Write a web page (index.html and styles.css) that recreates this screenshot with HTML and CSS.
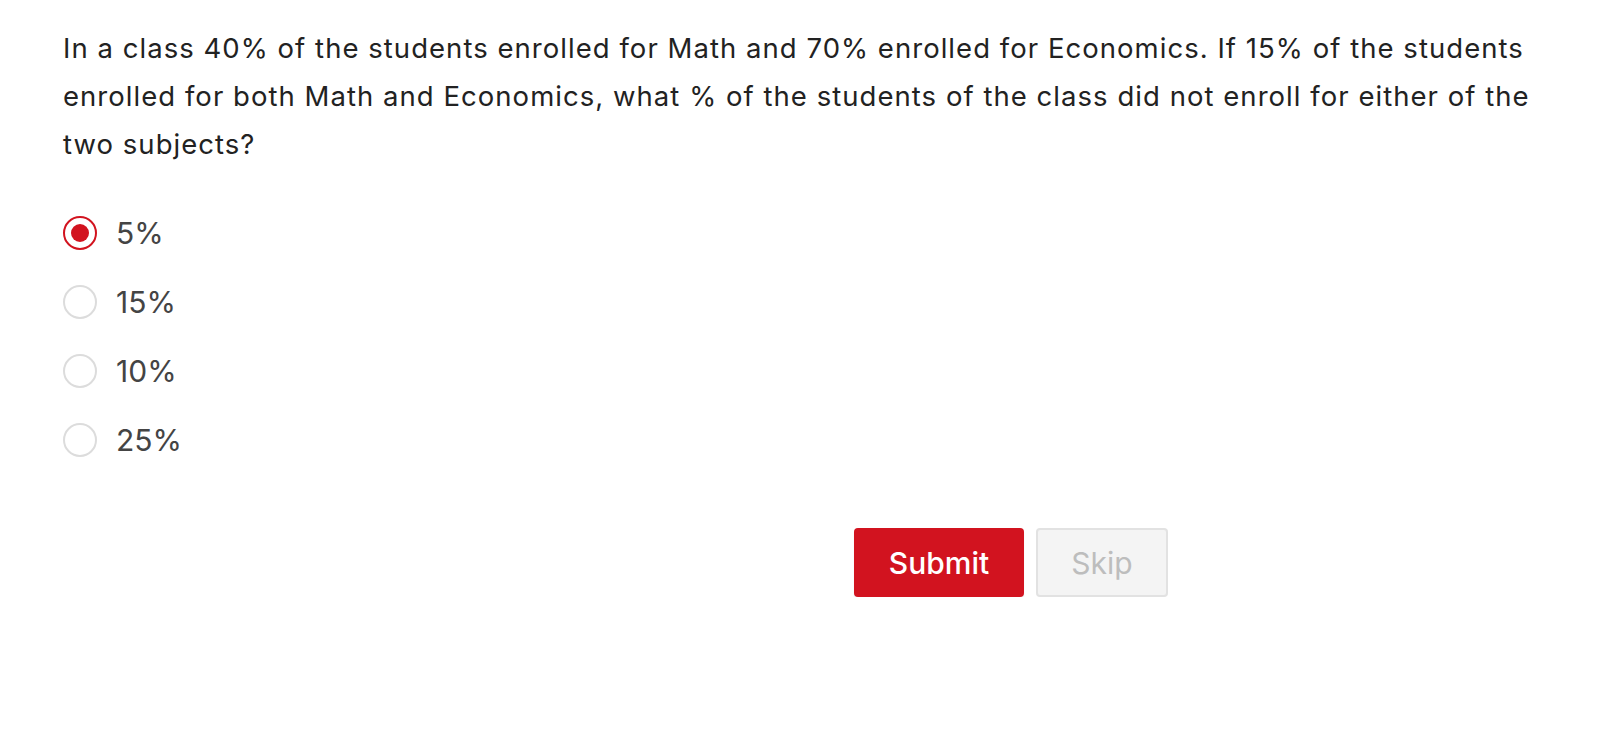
FILE: index.html
```html
<!DOCTYPE html>
<html lang="en">
<head>
<meta charset="utf-8">
<title>Question</title>
<link rel="stylesheet" href="styles.css">
</head>
<body>
<main class="quiz">
  <p class="question">In a class 40% of the students enrolled for Math and 70% enrolled for Economics. If 15% of the students enrolled for both Math and Economics, what % of the students of the class did not enroll for either of the two subjects?</p>
  <ul class="options">
    <li class="option checked"><span class="radio"><span class="dot"></span></span><span class="label">5%</span></li>
    <li class="option"><span class="radio"></span><span class="label">15%</span></li>
    <li class="option"><span class="radio"></span><span class="label">10%</span></li>
    <li class="option"><span class="radio"></span><span class="label">25%</span></li>
  </ul>
  <div class="actions">
    <button class="btn btn-submit">Submit</button>
    <button class="btn btn-skip">Skip</button>
  </div>
</main>
</body>
</html>
```
FILE: styles.css
```css
html, body {
  margin: 0;
  padding: 0;
  background: #ffffff;
}
.quiz {
  padding: 24px 0 0 63px;
  width: 1482px;
  font-family: Inter, "Liberation Sans", sans-serif;
}
.question {
  margin: 0;
  font-size: 27.5px;
  letter-spacing: 1.04px;
  line-height: 48px;
  color: #222222;
}
.options {
  list-style: none;
  margin: 48px 0 0 0;
  padding: 0;
  display: flex;
  flex-direction: column;
  gap: 35px;
}
.option {
  display: flex;
  align-items: center;
  height: 34px;
  gap: 19px;
}
.radio {
  box-sizing: border-box;
  width: 34px;
  height: 34px;
  border-radius: 50%;
  border: 2px solid #dcdcdc;
  display: flex;
  align-items: center;
  justify-content: center;
  flex: none;
}
.option.checked .radio {
  border-color: #d2131f;
}
.dot {
  width: 18px;
  height: 18px;
  border-radius: 50%;
  background: #d2131f;
}
.label {
  font-size: 30px;
  color: #444444;
  line-height: 34px;
}
.actions {
  display: flex;
  gap: 12px;
  margin: 71px 0 0 791px;
}
.btn {
  box-sizing: border-box;
  height: 69px;
  border-radius: 4px;
  font-family: Inter, "Liberation Sans", sans-serif;
  font-size: 30px;
  font-weight: 500;
  padding: 0;
  cursor: pointer;
}
.btn-submit {
  width: 170px;
  background: #d2131f;
  color: #ffffff;
  border: none;
  box-shadow: 0 3px 2px rgba(0, 0, 0, 0.06);
}
.btn-skip {
  width: 132px;
  background: #f4f4f4;
  color: #bdbdbd;
  border: 2px solid #e2e2e2;
  font-weight: 400;
}
```
